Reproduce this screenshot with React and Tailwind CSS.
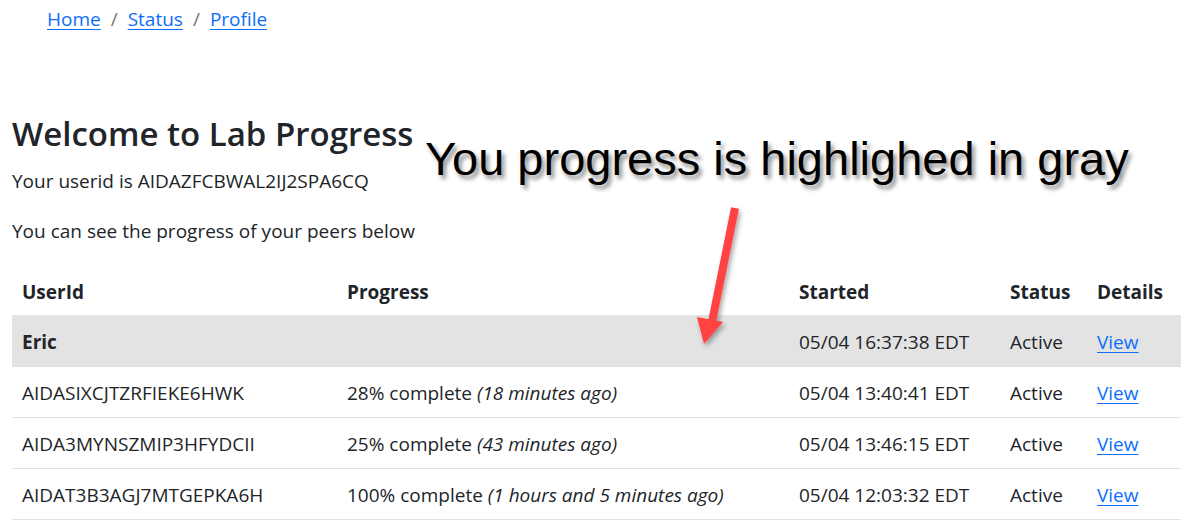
import React from "react";

const rows = [
  { id: "AIDASIXCJTZRFIEKE6HWK", pct: "28% complete", ago: "(18 minutes ago)", started: "05/04 13:40:41 EDT" },
  { id: "AIDA3MYNSZMIP3HFYDCII", pct: "25% complete", ago: "(43 minutes ago)", started: "05/04 13:46:15 EDT" },
  { id: "AIDAT3B3AGJ7MTGEPKA6H", pct: "100% complete", ago: "(1 hours and 5 minutes ago)", started: "05/04 12:03:32 EDT" },
];

const cell = "px-[10px] pt-[3px] whitespace-nowrap";
const link = "text-[#0d6efd] underline underline-offset-[3px]";

export default function App() {
  return (
    <div
      className="relative w-[1193px] h-[526px] overflow-hidden bg-white text-[#212529]"
      style={{ fontFamily: '"Open Sans", "Noto Sans", sans-serif' }}
    >
      <nav className="pl-[47px] pt-[4px] text-[19px] leading-[30px]">
        <ol className="flex items-center">
          <li><a href="#" className={link}>Home</a></li>
          <li className="px-[10px] text-[#6c757d]">/</li>
          <li><a href="#" className={link}>Status</a></li>
          <li className="px-[10px] text-[#6c757d]">/</li>
          <li><a href="#" className={link}>Profile</a></li>
        </ol>
      </nav>

      <div className="px-[12px] pt-[78px]">
        <h1 className="text-[33px] leading-[44px] font-semibold">Welcome to Lab Progress</h1>
        <p className="mt-[10px] text-[19px] leading-[30px]">Your userid is AIDAZFCBWAL2IJ2SPA6CQ</p>
        <p className="mt-[20px] text-[19px] leading-[30px]">You can see the progress of your peers below</p>

        <table className="mt-[20px] w-[1169px] table-fixed border-collapse text-[19px] leading-[30px]">
          <colgroup>
            <col className="w-[325px]" />
            <col className="w-[452px]" />
            <col className="w-[211px]" />
            <col className="w-[87px]" />
            <col className="w-[94px]" />
          </colgroup>
          <thead>
            <tr className="h-[49px] text-left">
              <th className="px-[10px] pt-[2px] font-bold">UserId</th>
              <th className="px-[10px] pt-[2px] font-bold">Progress</th>
              <th className="px-[10px] pt-[2px] font-bold">Started</th>
              <th className="px-[10px] pt-[2px] font-bold">Status</th>
              <th className="px-[10px] pt-[2px] font-bold">Details</th>
            </tr>
          </thead>
          <tbody>
            <tr className="h-[51px] bg-[#e3e3e3] border-b border-[#dee2e6]">
              <td className={cell + " font-bold"}>Eric</td>
              <td className={cell}></td>
              <td className={cell}>05/04 16:37:38 EDT</td>
              <td className={cell}>Active</td>
              <td className={cell}><a href="#" className={link}>View</a></td>
            </tr>
            {rows.map((r) => (
              <tr key={r.id} className="h-[51px] border-b border-[#dee2e6]">
                <td className={cell}>{r.id}</td>
                <td className={cell}>{r.pct} <em>{r.ago}</em></td>
                <td className={cell}>{r.started}</td>
                <td className={cell}>Active</td>
                <td className={cell}><a href="#" className={link}>View</a></td>
              </tr>
            ))}
          </tbody>
        </table>
      </div>

      <div
        className="absolute left-[425px] top-[129px] text-[47px] leading-[60px] text-black whitespace-nowrap"
        style={{ fontFamily: '"Liberation Sans", Arial, sans-serif', textShadow: "3px 4px 4px rgba(0,0,0,0.45)" }}
      >
        You progress is highlighed in gray
      </div>

      <svg className="absolute left-0 top-0 pointer-events-none" width="1193" height="526" viewBox="0 0 1193 526">
        <defs>
          <filter id="sh" x="-50%" y="-50%" width="200%" height="200%">
            <feDropShadow dx="2" dy="3" stdDeviation="2.5" floodColor="#000" floodOpacity="0.35" />
          </filter>
        </defs>
        <g filter="url(#sh)">
          <line x1="735" y1="208" x2="712" y2="322" stroke="#ff4242" strokeWidth="8" />
          <polygon points="697,317 723,322 704,344" fill="#ff4242" />
        </g>
      </svg>
    </div>
  );
}
